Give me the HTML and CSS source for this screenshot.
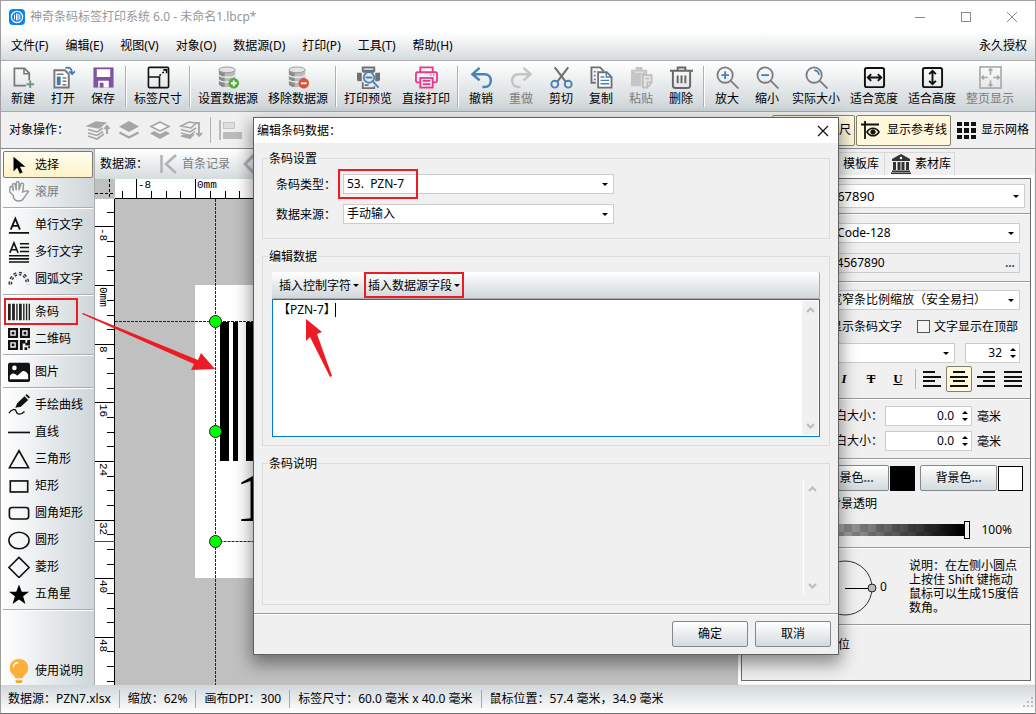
FILE: index.html
```html
<!DOCTYPE html>
<html lang="zh-CN">
<head>
<meta charset="utf-8">
<title>神奇条码标签打印系统</title>
<link rel="stylesheet" href="styles.css">
</head>
<body>
<div class="app">
  <header class="titlebar">
    <svg class="logo" width="16" height="16" viewBox="0 0 16 16"><rect width="16" height="16" rx="4" fill="#0a82f0"/><circle cx="8" cy="8" r="5.6" fill="none" stroke="#fff" stroke-width="1.2"/><path d="M5.5 5.5v5M7.5 4.5v7M9 4.5v7M10.8 5.5v5" stroke="#fff" stroke-width="1"/></svg>
    <h1 class="app-title">神奇条码标签打印系统 6.0 - 未命名1.lbcp*</h1>
    <div class="win-controls">
      <button class="win-btn" aria-label="最小化"><svg width="12" height="12"><path d="M1 6.500h10" stroke="#8a8a8a"/></svg></button>
      <button class="win-btn" aria-label="最大化"><svg width="12" height="12"><rect x="1.500" y="1.500" width="9" height="9" fill="none" stroke="#8a8a8a"/></svg></button>
      <button class="win-btn" aria-label="关闭"><svg width="12" height="12"><path d="M1 1l10 10M11 1L1 11" stroke="#8a8a8a"/></svg></button>
    </div>
  </header>

  <nav class="menubar">
    <button>文件(F)</button><button>编辑(E)</button><button>视图(V)</button><button>对象(O)</button><button>数据源(D)</button><button>打印(P)</button><button>工具(T)</button><button>帮助(H)</button>
    <button class="license">永久授权</button>
  </nav>

  <div class="toolbar">
    <button class="tool"><svg viewBox="0 0 24 24"><path d="M14.500 20.500H2.500V2.500H13l5 5V15" fill="none" stroke="#777" stroke-width="1.8"/><path d="M12.500 3v5h5" fill="none" stroke="#777" stroke-width="1.600"/><path d="M19 15v8M15 19h8" stroke="#71977e" stroke-width="2"/></svg>新建</button>
    <button class="tool"><svg viewBox="0 0 24 24"><path d="M2.500 4.500h11l4 4v14h-15z" fill="#fff" stroke="#777" stroke-width="2"/><path d="M5 8.500h7M11 12.500h4M11 16h4M11 19.500h4" stroke="#777" stroke-width="1.600"/><path d="M5 11h4v9H5z" fill="#4478b0"/><path d="M14 2c5-1 7 1 7 6M18 5.500l3 3 3-3" fill="none" stroke="#4478b0" stroke-width="1.800"/></svg>打开</button>
    <button class="tool"><svg viewBox="0 0 24 24"><path d="M1.500 1.500h21v21h-21z" fill="#8052a2"/><path d="M5 3.500h14v8H5zM6.500 15.500h11v7h-11z" fill="#fff"/><path d="M8 17.500h4v5H8z" fill="#8052a2"/></svg>保存</button>
    <i class="tool-sep"></i>
    <button class="tool wide4"><svg viewBox="0 0 24 24" fill="none" stroke="#111" stroke-width="1.700"><rect x="1.500" y="1.500" width="21" height="21" rx="1"/><path d="M2 11.500h11v11"/><path d="M13 10l7-6" stroke-dasharray="2 2"/><path d="M17 4h3.500v3.500"/></svg>标签尺寸</button>
    <i class="tool-sep"></i>
    <button class="tool wide5"><svg viewBox="0 0 24 24"><path d="M2 4v15c0 4 17 4 17 0V4z" fill="#bbb"/><path d="M2 4v15c1 2 4 3 6 3V6z" fill="#8b8b8b"/><path d="M2 9.500c2 3 15 3 17 0M2 14.500c2 3 15 3 17 0" fill="none" stroke="#eee" stroke-width="1.500"/><ellipse cx="10.500" cy="4" rx="8.500" ry="3" fill="#e4e4e4" stroke="#999"/><circle cx="17.500" cy="18" r="5.500" fill="#50ae38"/><path d="M17.500 15v6M14.500 18h6" stroke="#fff" stroke-width="2"/></svg>设置数据源</button>
    <button class="tool wide5"><svg viewBox="0 0 24 24"><path d="M2 4v15c0 4 17 4 17 0V4z" fill="#bbb"/><path d="M2 4v15c1 2 4 3 6 3V6z" fill="#8b8b8b"/><path d="M2 9.500c2 3 15 3 17 0M2 14.500c2 3 15 3 17 0" fill="none" stroke="#eee" stroke-width="1.500"/><ellipse cx="10.500" cy="4" rx="8.500" ry="3" fill="#e4e4e4" stroke="#999"/><circle cx="17.500" cy="18" r="5.500" fill="#df5037"/><path d="M14.500 18h6" stroke="#fff" stroke-width="2"/></svg>移除数据源</button>
    <i class="tool-sep"></i>
    <button class="tool wide4"><svg viewBox="0 0 24 24"><path d="M6 6V1.500h12V6" fill="none" stroke="#707070" stroke-width="2"/><path d="M0 7h5v9H2c-1 0-2-1-2-2zM19 7h5v7c0 1-1 2-2 2h-3zM6 4h12v3H6z" fill="#707070"/><path d="M6 17v6h12v-2M8 20h4" fill="none" stroke="#707070" stroke-width="1.800"/><circle cx="12.500" cy="12" r="5.500" fill="#dce9f5" stroke="#4b80ba" stroke-width="1.800"/><path d="M9 12h7" stroke="#707070" stroke-width="2"/><path d="M16.500 16l6 6.500" stroke="#4b80ba" stroke-width="2"/></svg>打印预览</button>
    <button class="tool wide4"><svg viewBox="0 0 24 24" fill="none" stroke="#e8398e" stroke-width="1.900"><path d="M5.500 6.500V1.500h13v5M5.500 17H2.500c-1 0-1.500-.5-1.500-1.500V8.500c0-1 .5-2 1.500-2h19c1 0 1.500 1 1.500 2v7c0 1-.5 1.500-1.500 1.500h-3"/><rect x="5.500" y="12.500" width="13" height="10"/><path d="M8 15.500h8M8 19h8M16 9.500h1M19 9.500h1"/></svg>直接打印</button>
    <i class="tool-sep"></i>
    <button class="tool"><svg viewBox="0 0 24 24" fill="none" stroke="#4b80ba" stroke-width="2.600"><path d="M10 2L2.500 8.500 10 15M3 8.500h12c9 0 9 13.500 0 13.500h-2"/></svg>撤销</button>
    <button class="tool" disabled><svg viewBox="0 0 24 24" fill="none" stroke="#c4c4c4" stroke-width="2.600"><path d="M14 2l7.500 6.500L14 15M21 8.500H9C0 8.500 0 22 9 22h2"/></svg>重做</button>
    <button class="tool"><svg viewBox="0 0 24 24" fill="none"><path d="M5 1.500l11.500 15M19 1.500L7.500 16.500" stroke="#707070" stroke-width="2.200"/><circle cx="5" cy="19" r="3.600" stroke="#4b80ba" stroke-width="2"/><circle cx="19" cy="19" r="3.600" stroke="#4b80ba" stroke-width="2"/></svg>剪切</button>
    <button class="tool"><svg viewBox="0 0 24 24"><path d="M6 17.500H1.500v-16h9l4 4" fill="none" stroke="#707070" stroke-width="1.900"/><path d="M4 6h2M4 10h2M4 14h2" stroke="#4b80ba" stroke-width="1.500"/><path d="M8.500 6.500h9l5 5v11h-14z" fill="#fff" stroke="#707070" stroke-width="1.900"/><path d="M17 6.500v5h5M11 11.500h4M11 15h9M11 18.500h9" fill="none" stroke="#4b80ba" stroke-width="1.500"/></svg>复制</button>
    <button class="tool" disabled><svg viewBox="0 0 24 24"><path d="M1 4h5V1h7v3h5v5h-6v12H1z" fill="#c6c6c6"/><path d="M5 6.500h9" stroke="#eee"/><path d="M13.500 9.500h9v8l-4.500 5h-4.500z" fill="#e6e6e6" stroke="#bdbdbd" stroke-width="1.800"/><path d="M22 17h-4v5M16 13h4" fill="none" stroke="#bdbdbd" stroke-width="1.500"/></svg>粘贴</button>
    <button class="tool"><svg viewBox="0 0 24 24" fill="none" stroke="#666" stroke-width="2"><path d="M0 5h24M8 5V1.500h8V5M3 5v15c0 2 1 3 3 3h12c2 0 3-1 3-3V5M8 10v8M12 10v8M16 10v8"/></svg>删除</button>
    <i class="tool-sep"></i>
    <button class="tool"><svg viewBox="0 0 24 24" fill="none"><circle cx="9.500" cy="9.500" r="8" stroke="#7d7d7d" stroke-width="1.900"/><path d="M15.500 15.500l8 8" stroke="#7d7d7d" stroke-width="2"/><path d="M9.500 5.500v8M5.500 9.500h8" stroke="#4b80ba" stroke-width="2"/></svg>放大</button>
    <button class="tool"><svg viewBox="0 0 24 24" fill="none"><circle cx="9.500" cy="9.500" r="8" stroke="#7d7d7d" stroke-width="1.900"/><path d="M15.500 15.500l8 8" stroke="#7d7d7d" stroke-width="2"/><path d="M5.500 9.500h8" stroke="#4b80ba" stroke-width="2"/></svg>缩小</button>
    <button class="tool wide4"><svg viewBox="0 0 24 24" fill="none"><circle cx="9.500" cy="9.500" r="8" stroke="#7d7d7d" stroke-width="1.900"/><path d="M15.500 15.500l8 8" stroke="#7d7d7d" stroke-width="2"/><path d="M9.500 4.500c3 0 5 2 5 5" stroke="#4b80ba" stroke-width="1.800"/></svg>实际大小</button>
    <button class="tool wide4"><svg viewBox="0 0 24 24" fill="none" stroke="#111" stroke-width="2"><rect x="2" y="2" width="20" height="20" rx="2"/><path d="M5 12h14M8.500 8.500L5 12l3.500 3.500M15.500 8.500L19 12l-3.500 3.500"/></svg>适合宽度</button>
    <button class="tool wide4"><svg viewBox="0 0 24 24" fill="none" stroke="#111" stroke-width="2"><rect x="2" y="2" width="20" height="20" rx="2"/><path d="M12 5v14M8.500 8.500L12 5l3.500 3.500M8.500 15.500L12 19l3.500-3.500"/></svg>适合高度</button>
    <button class="tool wide4" disabled><svg viewBox="0 0 24 24" fill="none" stroke="#a8a8a8" stroke-width="1.700"><rect x="1" y="1" width="22" height="22"/><path d="M12 3v6M12 15v6M3 12h6M15 12h6M10 5l2-2 2 2M10 19l2 2 2-2M5 10l-2 2 2 2M19 10l2 2-2 2"/></svg>整页显示</button>
  </div>

  <div class="opsbar">
    <span class="ops-label">对象操作：</span>
    <button class="op" aria-label="置于顶层" disabled><svg width="24" height="20" viewBox="0 0 24 20" fill="none" stroke="#a6a6a6" stroke-width="1.600"><path d="M2 6l8-4 9 1-6 5z" fill="#a6a6a6"/><path d="M2 9.500l9 2.500 6-4M2 13l9 2.500 6-4M2 16l9 3 7-5"/><path d="M21 14V7M18.500 9L21 6l2.500 3" stroke-width="2"/></svg></button>
    <button class="op" aria-label="上移一层" disabled><svg width="24" height="20" viewBox="0 0 24 20"><path d="M12 1l10 5.500L12 12 2 6.500z" fill="#a6a6a6"/><path d="M2.500 12.500l9.500 5 9.500-5" fill="none" stroke="#a6a6a6" stroke-width="2.400"/></svg></button>
    <button class="op" aria-label="下移一层" disabled><svg width="24" height="20" viewBox="0 0 24 20"><path d="M12 2l9 4.500L12 11 3 6.500z" fill="#f8f8f8" stroke="#a6a6a6" stroke-width="1.600"/><path d="M6 11l-4 2.500 10 5.500 10-5.500L18 11l-6 3z" fill="#a6a6a6"/></svg></button>
    <button class="op" aria-label="置于底层" disabled><svg width="24" height="20" viewBox="0 0 24 20" fill="none" stroke="#a6a6a6" stroke-width="1.600"><path d="M2 6l8-4 7 1-5 5zM2 9.500l9 2.500 6-4M2 13l9 2.500 5-4"/><path d="M2 16l9 2 3-3z" fill="#a6a6a6"/><path d="M17 3h3v12M17.500 13l2.500 3 3-3" stroke-width="1.800"/></svg></button>
    <i class="bar-sep"></i>
    <button class="op" aria-label="左对齐" disabled><svg width="24" height="20" viewBox="0 0 24 20"><path d="M1 0v20" stroke="#bbb" stroke-width="2"/><rect x="4.500" y="2.500" width="11" height="6" fill="#ddd" stroke="#c4c4c4"/><rect x="4" y="12" width="19" height="7" fill="#bcbcbc"/></svg></button>
    <div class="view-toggles">
      <button class="toggle on ruler-toggle">显示标尺</button>
      <button class="toggle on guide-toggle"><svg width="22" height="20" viewBox="0 0 22 20" fill="none" stroke="#111"><path d="M5 1v18M1 4.500h18" stroke-width="1.800"/><path d="M7 12c3-5 9-5 12 0-3 5-9 5-12 0z" stroke-width="1.600"/><circle cx="13" cy="12" r="2.200" fill="#111"/></svg>显示参考线</button>
      <button class="toggle"><svg width="19" height="19" viewBox="0 0 19 19" fill="#111"><path d="M0 1h5v4H0zM7 1h5v4H7zM14 1h5v4h-5zM0 7h5v5H0zM7 7h5v5H7zM14 7h5v5h-5zM0 14h5v4H0zM7 14h5v4H7zM14 14h5v4h-5z"/></svg>显示网格</button>
    </div>
  </div>

  <main class="workspace">
    <aside class="palette">
      <button class="pal selected"><svg viewBox="0 0 24 24"><path d="M6 3v16l4-4 3 6.500 3-1.500-3-6h6z" fill="#000"/></svg>选择</button>
      <button class="pal" disabled><svg viewBox="0 0 24 24" fill="none" stroke="#999" stroke-width="1.600"><path d="M6 16L2 12V7c1-2 3-1 3 1l1 3-1-7c1-2 3-1 3 0l1 6V2c1-2 3-1 3 0v8l2-7c1-1 3-1 3 1l-1 8 3-1c2-1 4 0 3 1l-5 7c-2 4-9 4-11-1z"/></svg>滚屏</button>
      <hr>
      <button class="pal"><svg viewBox="0 0 24 24" fill="none" stroke="#111" stroke-width="2"><path d="M3 17L8 5l5 12M5 13h6M1 20.500h22"/></svg>单行文字</button>
      <button class="pal"><svg viewBox="0 0 24 24" fill="none" stroke="#111" stroke-width="1.700"><path d="M2 13L6.500 2 11 13M4 9.500h5M13 3h10M13 7h10M13 11.500h10M1 16h22M1 19.500h22M1 23h22"/></svg>多行文字</button>
      <button class="pal"><svg viewBox="0 0 24 24" fill="none" stroke="#333" stroke-width="4"><path d="M2.500 18C3 2 21 2 21.500 18" stroke-dasharray="3 2.600"/><path d="M2.500 18C3 2 21 2 21.500 18" stroke="#e6eaec" stroke-width="1"/></svg>圆弧文字</button>
      <hr>
      <button class="pal boxed"><svg viewBox="0 0 24 24"><path d="M0 3h3v18H0zM4.500 3h3v18h-3zM9 3h1.500v18H9zM12 3h3v18h-3zM16.500 3H18v18h-1.500zM19.500 3H21v18h-1.500zM22.500 3H24v18h-1.500z" fill="#222"/></svg>条码</button>
      <button class="pal"><svg viewBox="0 0 24 24" fill="#111"><path d="M0 0h11v11H0zM2.500 2.500v6h6v-6zM4 4h3v3H4zM13 0h11v11H13zM15.500 2.500v6h6v-6zM17 4h3v3h-3zM0 13h11v11H0zM2.500 15.500v6h6v-6zM4 17h3v3H4zM13 13h6v3h2v-3h3v6h-5v-2h-3v7h-3zM18 21h3v3h-3zM22 20h2v2h-2z" fill-rule="evenodd"/></svg>二维码</button>
      <hr>
      <button class="pal"><svg viewBox="0 0 24 24"><rect y="2" width="24" height="21" rx="2" fill="#111"/><circle cx="7" cy="7.500" r="2.500" fill="#fff"/><path d="M2 20v-4c3-4 6-2 8 0l6-5c3-1 5 2 6 4v5z" fill="#fff"/></svg>图片</button>
      <hr>
      <button class="pal"><svg viewBox="0 0 24 24"><path d="M8 15l2-5 8-7.500 4 4-8 7.500zM19 1.500L20.500 0 24 3.500 22.700 5z" fill="#111"/><path d="M1 21c3-5 7-5 8-2 1 4 5 4 9 0" fill="none" stroke="#111" stroke-width="1.500"/></svg>手绘曲线</button>
      <button class="pal"><svg viewBox="0 0 24 24"><path d="M0 12.500h24" stroke="#111" stroke-width="1.800"/></svg>直线</button>
      <button class="pal"><svg viewBox="0 0 24 24"><path d="M12 3l10.500 18.500h-21z" fill="none" stroke="#111" stroke-width="1.800"/></svg>三角形</button>
      <button class="pal"><svg viewBox="0 0 24 24"><rect x="2.500" y="6.500" width="19" height="12" fill="none" stroke="#111" stroke-width="1.800"/></svg>矩形</button>
      <button class="pal"><svg viewBox="0 0 24 24"><rect x="1.500" y="6" width="21" height="12.500" rx="3" fill="none" stroke="#111" stroke-width="1.800"/></svg>圆角矩形</button>
      <button class="pal"><svg viewBox="0 0 24 24"><ellipse cx="12" cy="12.500" rx="11" ry="9" fill="none" stroke="#111" stroke-width="1.700"/></svg>圆形</button>
      <button class="pal"><svg viewBox="0 0 24 24"><path d="M12 1.500L23 12.500l-11 11-11-11z" fill="none" stroke="#111" stroke-width="1.700"/></svg>菱形</button>
      <button class="pal"><svg viewBox="0 0 24 24"><path d="M12 1.500l3 8h8l-6.500 5 2.500 8.500-7-5-7 5 2.500-8.500L1 9.500h8z" fill="#000"/></svg>五角星</button>
      <hr>
      <button class="pal help"><svg viewBox="0 0 24 28"><path d="M12 1C5 1 2 6 2 11c0 6 5 7 6 11h8c1-4 6-5 6-11C22 6 19 1 12 1z" fill="#fbb03b"/><path d="M6 10c0-3 2-5 5-5" fill="none" stroke="#fff" stroke-width="1.500"/><path d="M8 24h8l-1 3H9z" fill="#f5a52a"/></svg>使用说明</button>
    </aside>

    <section class="center">
      <div class="databar">
        <span>数据源：</span>
        <button disabled><svg width="18" height="20" viewBox="0 0 18 20"><path d="M1.500 1v18M16 1L6 10l10 9" fill="none" stroke="#b2b2b2" stroke-width="2.500"/></svg>首条记录</button>
        <button disabled aria-label="上条记录"><svg width="18" height="20" viewBox="0 0 18 20"><path d="M12 1L3 10l9 9" fill="none" stroke="#b2b2b2" stroke-width="3"/></svg></button>
      </div>
      <svg class="stage">
        <rect x="100" y="106" width="440" height="293" fill="#fff"/>
        <path d="M125 143h9v139h-9zM138 143h5v139h-5zM151 143h10v139h-10z"/>
        <text class="code-digit" x="140" y="342">1</text>
        <g class="guides"><path d="M20 142.500h500M120.500 362.500h400"/><line x1="120.500" y1="20" x2="120.500" y2="100%"/></g>
        <g class="handles"><circle cx="120.500" cy="142.500" r="6"/><circle cx="120.500" cy="252.500" r="6"/><circle cx="120.500" cy="362.500" r="6"/></g>
        <rect width="100%" height="20" fill="#fff"/>
        <rect width="20" height="100%" fill="#fff"/>
        <rect width="20" height="20" fill="#c0c0c0"/>
        <g class="ticks">
          <path d="M20 19.500h600M41.500 0v20M100.500 0v20M27.500 12v8M56.500 12v8M71.500 12v8M85.500 12v8M115.500 12v8M130.500 12v8M144.500 12v8"/>
          <line x1="19.500" y1="20" x2="19.500" y2="100%"/>
          <path d="M0 47.500h20M0 106.500h20M0 165.500h20M0 223.500h20M0 282.500h20M0 341.500h20M0 399.500h20M0 458.500h20"/>
          <path d="M12 33.500h8M12 62.500h8M12 77.500h8M12 91.500h8M12 121.500h8M12 136.500h8M12 150.500h8M12 179.500h8M12 194.500h8M12 209.500h8M12 238.500h8M12 253.500h8M12 267.500h8M12 297.500h8M12 311.500h8M12 326.500h8M12 355.500h8M12 370.500h8M12 385.500h8M12 414.500h8M12 429.500h8M12 443.500h8M12 472.500h8M12 487.500h8M12 502.500h8"/>
          <path d="M0 14.500h20M14.500 0v20" stroke-dasharray="3 2"/>
          <path d="M0 362.500h20" stroke="#f00"/>
        </g>
        <g class="ruler-text">
          <text x="43" y="9">-8</text><text x="102" y="9">0mm</text>
          <text transform="translate(5 49) rotate(90)">-8</text><text transform="translate(5 108) rotate(90)">0mm</text><text transform="translate(5 167) rotate(90)">8</text><text transform="translate(5 225) rotate(90)">16</text><text transform="translate(5 284) rotate(90)">24</text><text transform="translate(5 343) rotate(90)">32</text><text transform="translate(5 401) rotate(90)">40</text><text transform="translate(5 460) rotate(90)">48</text>
        </g>
      </svg>
    </section>

    <aside class="props">
      <div class="tabs">
        <button class="tab">模板库</button>
        <button class="tab"><svg width="20" height="20" viewBox="0 0 20 20" fill="#333"><path d="M10 0l9 5v2H1V5zM2 8h3v8H2zM6.500 8h3v8h-3zM10.500 8h3v8h-3zM15 8h3v8h-3zM1 16.500h18V18H1zM0 18.500h20V20H0z"/><circle cx="10" cy="4" r="1.200" fill="#fff"/></svg>素材库</button>
      </div>
      <div class="sheet">
        <div class="group g-object"><div class="pick big"><select aria-label="对象"><option>1234567890</option></select></div></div>
        <div class="group g-code">
          <div class="pick"><select aria-label="条码类型"><option>28. Code-128</option></select></div>
          <div class="data-field"><input aria-label="数据" value="1234567890"><button aria-label="编辑数据">...</button></div>
        </div>
        <div class="group g-text">
          <div class="pick"><select aria-label="缩放方式"><option>按宽窄条比例缩放（安全易扫）</option></select></div>
          <div class="line checks"><label>显示条码文字</label><label class="check"><input type="checkbox">文字显示在顶部</label></div>
          <div class="line fonts"><div class="pick"><select aria-label="字体"><option></option></select></div><div class="spin narrow"><input aria-label="字号" value="32"><i></i></div></div>
          <div class="line format">
            <button class="fmt" aria-label="斜体"><b class="it">I</b></button><button class="fmt" aria-label="删除线"><b class="st">T</b></button><button class="fmt" aria-label="下划线"><b class="un">U</b></button>
            <i class="bar-sep"></i>
            <button class="fmt" aria-label="左对齐"><svg width="18" height="16"><path d="M0 1h12M0 6h18M0 10h12M0 15h18"/></svg></button>
            <button class="fmt on" aria-label="居中"><svg width="18" height="16"><path d="M3 1h12M0 6h18M3 10h12M0 15h18"/></svg></button>
            <button class="fmt" aria-label="右对齐"><svg width="18" height="16"><path d="M6 1h12M0 6h18M6 10h12M0 15h18"/></svg></button>
            <button class="fmt" aria-label="两端对齐"><svg width="18" height="16"><path d="M0 1h18M0 6h18M0 10h18M0 15h18"/></svg></button>
          </div>
        </div>
        <div class="group g-margin">
          <div class="line"><label for="m1">左空白大小：</label><div class="spin"><input id="m1" value="0.0"><i></i></div><span class="unit">毫米</span></div>
          <div class="line"><label for="m2">右空白大小：</label><div class="spin"><input id="m2" value="0.0"><i></i></div><span class="unit">毫米</span></div>
        </div>
        <div class="group g-color">
          <div class="line colors"><button class="btn">前景色<span class="dots">...</span></button><i class="swatch black"></i><button class="btn second">背景色<span class="dots">...</span></button><i class="swatch"></i></div>
          <div class="transparent">背景透明</div>
          <div class="line opacity"><div class="slider"><i></i></div><output>100%</output></div>
        </div>
        <div class="group g-angle">
          <svg class="dial" width="60" height="58"><circle cx="28" cy="29" r="27" fill="none" stroke="#333"/><path d="M28 29.500h25" stroke="#000"/><circle cx="55" cy="29" r="4" fill="#bbb" stroke="#222"/></svg>
          <output class="angle">0</output>
          <p>说明：在左侧小圆点<br>上按住 Shift 键拖动<br>鼠标可以生成15度倍<br>数角。</p>
        </div>
        <div class="g-unit">单位</div>
      </div>
    </aside>
  </main>

  <footer class="status"><span>数据源：PZN7.xlsx</span><span>缩放：62%</span><span>画布DPI：300</span><span>标签尺寸：60.0 毫米 x 40.0 毫米</span><span>鼠标位置：57.4 毫米，34.9 毫米</span>
    <svg class="grip" width="12" height="12" fill="#b8bcbf"><path d="M8 0h2v2H8zM4 4h2v2H4zM8 4h2v2H8zM0 8h2v2H0zM4 8h2v2H4zM8 8h2v2H8z"/></svg>
  </footer>

  <svg class="arrow-long" width="133" height="60"><path d="M0 1l112 50-3 6 24-1L119 40l-3 7L1 0z" fill="#ed1c24"/></svg>

  <div class="dialog" role="dialog" aria-label="编辑条码数据">
    <div class="dlg-title"><span>编辑条码数据：</span><button aria-label="关闭"><svg width="12" height="12"><path d="M1 1l10 10M11 1L1 11" stroke="#111" stroke-width="1.200"/></svg></button></div>
    <div class="dlg-body">
      <fieldset class="fs-setup"><legend>条码设置</legend>
        <div class="dlg-row"><label for="kind">条码类型：</label><div class="pick marked"><select id="kind"><option>53.&nbsp; PZN-7</option></select></div></div>
        <div class="dlg-row"><label for="src">数据来源：</label><div class="pick"><select id="src"><option>手动输入</option></select></div></div>
      </fieldset>
      <fieldset class="fs-edit"><legend>编辑数据</legend>
        <div class="insert-bar"><button>插入控制字符<i class="caret"></i></button><button class="framed">插入数据源字段<i class="caret"></i></button></div>
        <div class="editor">
          <textarea aria-label="条码数据">【PZN-7】</textarea><i class="cursor"></i>
          <div class="scroll"><svg width="9" height="6"><path d="M1 5l3.500-3.500L8 5"/></svg><svg width="9" height="6"><path d="M1 1l3.500 3.500L8 1"/></svg></div>
          <svg class="arrow-short" width="28" height="58"><path d="M1 0l16 13-5 2 15 42-2 1L5 18l-4 4z" fill="#ed1c24"/></svg>
        </div>
      </fieldset>
      <fieldset class="fs-info"><legend>条码说明</legend>
        <div class="scroll"><svg width="9" height="6"><path d="M1 5l3.500-3.500L8 5"/></svg><svg width="9" height="6"><path d="M1 1l3.500 3.500L8 1"/></svg></div>
      </fieldset>
    </div>
    <div class="dlg-actions"><button class="btn">确定</button><button class="btn">取消</button></div>
  </div>
</div>
</body>
</html>
```
FILE: styles.css
```css
*, *::before, *::after { box-sizing: border-box; }
body { margin: 0; background: #f0f0f0; color: #000; font: 12px/16px "Noto Sans", "Noto Sans CJK SC", sans-serif; }
button, input, select, textarea { font: inherit; color: inherit; margin: 0; padding: 0; border: 0; border-radius: 0; background: none; outline: 0; }
button { white-space: nowrap; }
button:disabled { color: #7c7c7c; }
select { appearance: none; opacity: 1; }
i { display: block; flex: none; }
svg { display: block; flex: none; }

.app { position: relative; display: flex; flex-direction: column; height: 100vh; min-height: 714px; border: 1px solid #a0a0a0; border-bottom-color: #707070; overflow: hidden; }

.titlebar { display: flex; align-items: center; height: 31px; padding-left: 8px; background: #fff; }
.app-title { margin: 0 0 0 5px; font-size: 12px; font-weight: 400; color: #969696; }
.win-controls { display: flex; margin-left: auto; }
.win-btn { display: flex; justify-content: center; align-items: center; width: 46px; height: 30px; }

.menubar { display: flex; align-items: center; gap: 17px; height: 29px; padding: 0 8px 0 10px; background: linear-gradient(#fff, #d5dbde); border-bottom: 1px solid #a9adb0; }
.license { margin-left: auto; }

.toolbar { display: flex; height: 51px; padding: 5px 0 0 2px; background: linear-gradient(#fff, #cdd4d7); border-bottom: 1px solid #a5a9ac; }
.tool { display: flex; flex-direction: column; align-items: center; gap: 2px; width: 40px; height: 42px; }
.tool svg { width: 23px; height: 23px; }
.wide4 { width: 58px; }
.wide5 { width: 70px; }
.tool-sep { width: 2px; height: 41px; margin: 0 2px; background: linear-gradient(90deg, #adb1b4 50%, #fff 50%); }

.opsbar { display: flex; align-items: center; height: 37px; padding-left: 8px; border-bottom: 1px solid #8a8a8a; }
.ops-label { width: 77px; }
.op { width: 24px; height: 20px; margin-right: 7px; }
.bar-sep { width: 1px; height: 26px; margin: 0 8px 0 0; background: #b4b4b4; }
.view-toggles { display: flex; margin-left: auto; gap: 1px; padding-right: 1px; }
.toggle { display: flex; align-items: center; gap: 5px; height: 31px; padding: 0 4px; border: 1px solid transparent; border-radius: 2px; }
.toggle.on { background: #fff8dc; border-color: #84816f; }
.ruler-toggle { width: 83px; justify-content: flex-end; padding-right: 3px; }
.guide-toggle { width: 95px; padding: 0 3px; }

.workspace { display: flex; flex: 1; min-height: 0; }
.palette { display: flex; flex-direction: column; width: 94px; padding: 2px 1px 1px 2px; background: linear-gradient(90deg, #fff, #cfd6da); border-right: 1px solid #a9adb0; }
.palette hr { flex: none; width: 90px; height: 2px; margin: 2px 0; border: 0; background: linear-gradient(#a9adb0 50%, #fff 50%); }
.pal { display: flex; align-items: center; gap: 4px; height: 27px; padding-left: 4px; border: 1px solid transparent; text-align: left; }
.pal svg { width: 22px; height: 22px; margin-right: 1px; }
.pal.selected { background: linear-gradient(#fffdf0, #fdf3c8); border-color: #7b7969; border-radius: 2px; }
.pal.boxed { position: relative; }
.pal.boxed::after { content: ""; position: absolute; left: 0; top: -1px; width: 74px; height: 27px; border: 2px solid #ed1c24; }
.pal.help { margin-top: auto; }
.pal.help svg { height: 26px; }

.center { display: flex; flex-direction: column; flex: 1; min-width: 0; background: #c0c0c0; }
.databar { display: flex; align-items: center; gap: 12px; height: 30px; flex: none; padding-left: 5px; background: linear-gradient(#fff, #d5dbde); overflow: hidden; }
.databar button { display: flex; align-items: center; gap: 4px; }
.stage { width: 100%; flex: 1; min-height: 0; background: #c0c0c0; }
.code-digit { font: 70px "Liberation Serif", serif; }
.guides { fill: none; stroke: #1010d0; stroke-dasharray: 3 1; }
.handles { fill: #0f0; stroke: #222; stroke-width: 1; }
.ticks { fill: none; stroke: #000; shape-rendering: crispEdges; }
.ruler-text { font: 11px "Liberation Mono", monospace; }

.props { display: flex; flex-direction: column; width: 297px; padding: 3px 2px 2px 0; background: #f0f0f0; border-left: 2px solid #e6e6e6; }
.tabs { display: flex; align-items: stretch; height: 23px; padding-left: 72px; }
.tab { display: flex; align-items: center; gap: 4px; padding: 0 3px 0 6px; border: 1px solid #d8d8d8; border-left: 0; border-bottom: 0; }
.tab:first-child { padding-left: 31px; padding-right: 5px; }
.sheet { display: flex; flex-direction: column; flex: 1; border: 1px solid #6b6b6b; outline: 3px solid #fff; margin: 3px 2px 2px 1px; }
.group { border-bottom: 1px solid #9a9a9a; box-shadow: 0 1px #fff; padding: 9px 10px 0 24px; flex: none; }
.pick { position: relative; height: 20px; background: #fff; border: 1px solid #cdcdcd; }
.pick select { display: block; width: 100%; height: 100%; padding: 0 20px 0 3px; line-height: 18px; }
.pick::after, .caret { content: ""; width: 0; height: 0; border: 3px solid transparent; border-top-color: #000; border-bottom: 0; }
.pick::after { position: absolute; right: 5px; top: 8px; pointer-events: none; }
.line { display: flex; justify-content: flex-end; align-items: center; }
.g-object { height: 35px; padding: 5px 5px 0 46px; }
.pick.big { height: 24px; }
.pick.big select { padding-left: 11px; font-size: 13px; }
.pick.big::after { top: 10px; }
.g-code { height: 68px; }
.g-code .pick select { padding-left: 50px; }
.data-field { display: flex; height: 20px; margin-top: 10px; border: 1px solid #cdcdcd; }
.data-field input { flex: 1; min-width: 0; padding-left: 49px; }
.data-field button { padding-right: 4px; font-weight: 700; color: #2a5a8c; }
.g-text { height: 117px; padding-top: 8px; }
.g-text > .pick select { padding-left: 51px; }
.checks { height: 33px; gap: 15px; padding-right: 2px; }
.check { display: flex; align-items: center; gap: 4px; }
.check input { appearance: none; width: 13px; height: 13px; border: 1px solid #555; background: #f4f4f4; }
.fonts { gap: 10px; }
.fonts .pick { flex: 1; }
.spin { position: relative; display: flex; width: 87px; height: 20px; background: #fff; border: 1px solid #cdcdcd; }
.spin input { width: 100%; min-width: 0; padding-right: 17px; text-align: right; }
.spin.narrow { width: 55px; }
.spin i { position: absolute; right: 3px; top: 4px; width: 6px; height: 10px; }
.spin i::before, .spin i::after { content: ""; position: absolute; left: 0; border: 3px solid transparent; }
.spin i::before { top: 0; border-top: 0; border-bottom-color: #000; }
.spin i::after { bottom: 0; border-bottom: 0; border-top-color: #000; }
.format { height: 26px; margin: 3px -6px 0 0; gap: 1px; }
.fmt { display: flex; justify-content: center; align-items: center; width: 26px; height: 26px; border: 1px solid transparent; }
.fmt.on { background: #fff8dc; border-color: #84816f; border-radius: 2px; }
.fmt svg { fill: none; stroke: #111; stroke-width: 2; }
.fmt b { font: 700 13px/16px "Liberation Serif", serif; }
.fmt .it { font-style: italic; }
.fmt .st { text-decoration: line-through; }
.fmt .un { text-decoration: underline; }
.format .bar-sep { height: 20px; margin: 0 2px 0 3px; }
.g-margin { height: 60px; padding-top: 7px; }
.g-margin .line { margin-bottom: 5px; }
.g-margin label { margin-right: 2px; }
.unit { width: 48px; padding: 2px 0 0 5px; }
.g-color { height: 89px; padding: 6px 7px 0 24px; }
.btn { height: 26px; border: 1px solid #84888b; border-radius: 2px; background: linear-gradient(#fff, #d3dadd); }
.colors .btn { width: 77px; }
.dots { font-weight: 700; color: #2a5a8c; }
.swatch { width: 25px; height: 25px; margin-left: 1px; border: 1px solid #000; background: #fff; }
.swatch.black { background: #000; }
.btn.second { margin-left: 5px; }
.transparent { height: 27px; padding: 5px 0 0 63px; }
.opacity { gap: 13px; padding-right: 11px; height: 24px; }
.slider { position: relative; width: 180px; height: 12px; background: linear-gradient(90deg, transparent, #000 95%), repeating-conic-gradient(#ccc 0 25%, #eee 0 50%) 0 0 / 16px 16px; }
.slider i { position: absolute; right: -2px; top: -3px; width: 6px; height: 18px; border: 1px solid #000; background: #eee; }
.g-angle { display: flex; height: 77px; padding: 11px 0 0 75px; }
.angle { width: 32px; padding-top: 20px; padding-left: 3px; }
.g-angle p { margin: 0; line-height: 14px; white-space: nowrap; }
.g-unit { padding: 12px 0 0 84px; }

.status { display: flex; align-items: center; height: 28px; padding-left: 7px; background: linear-gradient(#d0d7db, #fff); }
.status span { height: 18px; padding: 1px 8px 0 0; margin-right: 8px; border-right: 1px solid #a5a9ac; }
.status span:nth-of-type(5) { border: 0; }
.grip { margin: 8px 0 0 auto; }

.arrow-long { position: absolute; left: 81px; top: 312px; }

.dialog { position: absolute; left: 252px; top: 116px; width: 586px; height: 538px; display: flex; flex-direction: column; background: #f0f0f0; border: 1px solid #606060; box-shadow: 0 7px 16px 2px rgba(0, 0, 0, .42); }
.dlg-title { display: flex; align-items: center; justify-content: space-between; height: 25px; flex: none; padding: 0 9px 0 3px; background: #fff; }
.dlg-body { flex: 1; padding: 15px 8px 0; display: flex; flex-direction: column; gap: 17px; }
fieldset { position: relative; min-width: 0; margin: 0; padding: 0; border: 1px solid #dcdcdc; }
legend { position: absolute; left: 5px; top: -8px; padding: 0 1px; background: #f0f0f0; line-height: 16px; }
.fs-setup { height: 81px; padding: 15px 0 0 13px; }
.dlg-row { display: flex; align-items: center; height: 20px; margin-bottom: 10px; }
.dlg-row label { width: 67px; padding-top: 2px; }
.dlg-row .pick { width: 271px; }
.pick.marked::before { content: ""; position: absolute; left: -6px; top: -6px; width: 80px; height: 30px; border: 2px solid #ed1c24; pointer-events: none; }
.fs-edit { height: 190px; padding: 15px 9px 0; }
.insert-bar { display: flex; height: 27px; background: linear-gradient(#fff, #d0d7da); border-bottom: 1px solid #a9adb0; border-right: 1px solid #a9adb0; border-radius: 2px; padding: 1px 0 0 7px; gap: 9px; }
.insert-bar button { position: relative; display: flex; align-items: center; gap: 2px; }
.insert-bar .framed::after { content: ""; position: absolute; left: -4px; top: -1px; width: 100px; height: 26px; border: 2px solid #ed1c24; }
.editor { position: relative; display: flex; height: 138px; background: #fff; border: 1px solid #0078d7; padding: 1px; }
.editor textarea { flex: 1; padding: 1px 4px; resize: none; overflow: hidden; }
.cursor { position: absolute; left: 62px; top: 3px; width: 1px; height: 14px; background: #000; }
.scroll { display: flex; flex-direction: column; justify-content: space-between; align-items: center; width: 16px; padding: 6px 0; background: #f0f0f0; }
.scroll svg { fill: none; stroke: #bdbdbd; stroke-width: 2; }
.arrow-short { position: absolute; left: 32px; top: 19px; }
.fs-info { display: flex; justify-content: flex-end; height: 142px; padding: 16px 9px 9px 0; }
.fs-info .scroll { width: 17px; height: 115px; border-left: 1px solid #fff; }
.dlg-actions { display: flex; justify-content: flex-end; gap: 7px; height: 41px; flex: none; padding: 7px 7px 0; border-top: 1px solid #a0a0a0; box-shadow: inset 0 1px #fff; }
.dlg-actions .btn { width: 76px; }
```
